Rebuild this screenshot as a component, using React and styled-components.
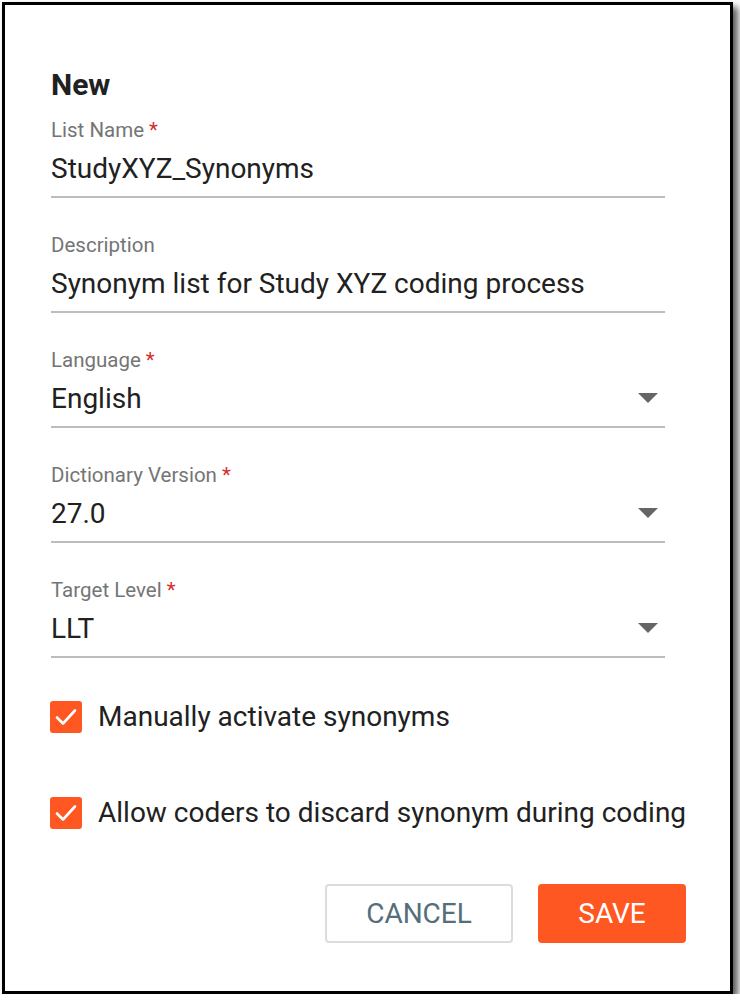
import React from 'react'
import styled, { createGlobalStyle } from 'styled-components'

const GlobalStyle = createGlobalStyle`
  html, body {
    margin: 0;
    padding: 0;
    background: #fff;
  }
  body {
    font-family: Roboto, "Liberation Sans", Arial, sans-serif;
    color: #212121;
  }
`

const Frame = styled.div`
  box-sizing: border-box;
  margin: 2px 0 0 2px;
  width: 731px;
  height: 992px;
  border: 3px solid #000;
  background: #fff;
  box-shadow: 5px 5px 7px rgba(0, 0, 0, 0.65);
  padding: 63px 44px 0 46px;
`

const Title = styled.h2`
  margin: 0 0 16px;
  font-size: 30px;
  line-height: 34px;
  font-weight: 700;
  color: #212121;
`

const Form = styled.div`
  display: flex;
  flex-direction: column;
  gap: 35px;
  width: 614px;
`

const Field = styled.div`
  display: flex;
  flex-direction: column;
`

const Label = styled.label`
  font-size: 20.5px;
  line-height: 24px;
  color: #757575;
`

const Required = styled.span`
  color: #d32f2f;
  margin-left: 5px;
`

const InputRow = styled.div`
  display: flex;
  align-items: flex-end;
  justify-content: space-between;
  height: 56px;
  box-sizing: border-box;
  padding: 0 7px 11px 0;
  border-bottom: 2px solid #bdbdbd;
`

const Value = styled.span`
  font-size: 28px;
  line-height: 32px;
  color: #212121;
`

const Caret = styled.span`
  width: 0;
  height: 0;
  border-left: 10px solid transparent;
  border-right: 10px solid transparent;
  border-top: 10px solid #666;
  margin-bottom: 12px;
`

const Checks = styled.div`
  display: flex;
  flex-direction: column;
  gap: 64px;
  margin-top: 43px;
`

const CheckRow = styled.label`
  display: flex;
  align-items: center;
  gap: 16px;
  margin-left: -1px;
  font-size: 28px;
  line-height: 32px;
  color: #212121;
  white-space: nowrap;
`

const Box = styled.span`
  display: flex;
  align-items: center;
  justify-content: center;
  width: 32px;
  height: 32px;
  border-radius: 3px;
  background: #ff5722;
  flex: none;
`

const Actions = styled.div`
  display: flex;
  justify-content: flex-end;
  gap: 25px;
  margin-top: 55px;
`

const Button = styled.button`
  box-sizing: border-box;
  height: 59px;
  width: ${p => (p.$primary ? '148px' : '188px')};
  border-radius: 4px;
  font-family: Roboto, "Liberation Sans", Arial, sans-serif;
  font-size: 28px;
  text-transform: uppercase;
  cursor: pointer;
  border: ${p => (p.$primary ? 'none' : '2px solid #dcdcdc')};
  background: ${p => (p.$primary ? '#ff5722' : '#fff')};
  color: ${p => (p.$primary ? '#fff' : '#546e7a')};
`

const fields = [
  { label: 'List Name', required: true, value: 'StudyXYZ_Synonyms' },
  { label: 'Description', value: 'Synonym list for Study XYZ coding process' },
  { label: 'Language', required: true, value: 'English', select: true },
  { label: 'Dictionary Version', required: true, value: '27.0', select: true },
  { label: 'Target Level', required: true, value: 'LLT', select: true },
]

const options = ['Manually activate synonyms', 'Allow coders to discard synonym during coding']

function Check() {
  return (
    <svg width="22" height="18" viewBox="0 0 22 18" fill="none">
      <path d="M2 9.5l6 6L20 2.5" stroke="#fff" strokeWidth="2.6" strokeLinecap="round" strokeLinejoin="round" />
    </svg>
  )
}

export default function App() {
  return (
    <>
      <GlobalStyle />
      <Frame>
        <Title>New</Title>
        <Form>
          {fields.map(f => (
            <Field key={f.label}>
              <Label>
                {f.label}
                {f.required && <Required>*</Required>}
              </Label>
              <InputRow>
                <Value>{f.value}</Value>
                {f.select && <Caret />}
              </InputRow>
            </Field>
          ))}
        </Form>
        <Checks>
          {options.map(o => (
            <CheckRow key={o}>
              <Box><Check /></Box>
              {o}
            </CheckRow>
          ))}
        </Checks>
        <Actions>
          <Button>Cancel</Button>
          <Button $primary>Save</Button>
        </Actions>
      </Frame>
    </>
  )
}
